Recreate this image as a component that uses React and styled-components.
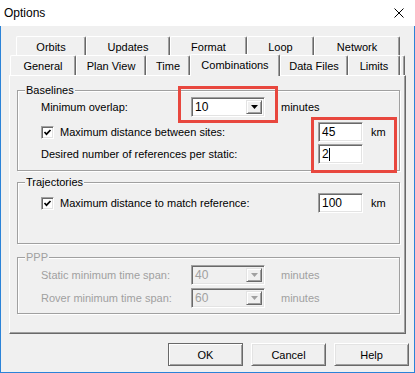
import React from 'react';
import styled, { createGlobalStyle } from 'styled-components';

const GlobalStyle = createGlobalStyle`
  html, body {
    margin: 0;
    padding: 0;
    background: #fff;
  }
  body {
    font-family: "Liberation Sans", Arial, sans-serif;
    font-size: 11px;
    color: #000;
  }
  * {
    box-sizing: border-box;
  }
`

const Window = styled.div`
  width: 415px;
  height: 373px;
  display: flex;
  flex-direction: column;
  background: #f0f0f0;
`

const TitleBar = styled.div`
  height: 26px;
  flex: none;
  display: flex;
  align-items: center;
  justify-content: space-between;
  padding: 0 11px 0 4px;
  background: #fff;
  font-size: 12px;
`

const Body = styled.div`
  flex: 1;
  display: flex;
  flex-direction: column;
  padding-top: 10px;
  border: 1px solid #2b83d8;
  border-top: none;
`

const TabRow = styled.div`
  display: flex;
  align-items: flex-end;
  height: ${(p) => p.$h}px;
  padding-left: ${(p) => p.$pl}px;
`

const Tab = styled.div`
  flex: none;
  width: ${(p) => p.$w}px;
  height: ${(p) => (p.$active ? '22px' : '100%')};
  margin-bottom: ${(p) => (p.$active ? '-1px' : '0')};
  position: ${(p) => (p.$active ? 'relative' : 'static')};
  z-index: ${(p) => (p.$active ? 1 : 'auto')};
  display: flex;
  align-items: center;
  justify-content: center;
  padding-bottom: ${(p) => (p.$active ? '2px' : '0')};
  padding-top: ${(p) => (p.$active ? '0' : '1px')};
  background: #f0f0f0;
  border-left: 1px solid #fff;
  border-top: 1px solid #fff;
  border-right: 1px solid #696969;
  border-top-left-radius: 2px;
  border-top-right-radius: 2px;
  box-shadow: inset -1px 0 0 #a0a0a0;
  white-space: nowrap;
`

const Panel = styled.div`
  margin-left: 8px;
  width: 397px;
  height: 259px;
  flex: none;
  display: flex;
  flex-direction: column;
  padding: 14px 0 0 7px;
  border: 1px solid;
  border-color: #fff #696969 #696969 #fff;
  box-shadow: inset -1px -1px 0 #a0a0a0;
`

const Group = styled.div`
  width: 383px;
  height: ${(p) => p.$h}px;
  margin-top: ${(p) => p.$mt || 0}px;
  flex: none;
  display: flex;
  flex-direction: column;
  padding-left: 23px;
  border: 1px solid #a0a0a0;
  box-shadow: 1px 1px 0 #fff, inset 1px 1px 0 #fff;
`

const GroupTitle = styled.div`
  align-self: flex-start;
  margin: -7px 0 0 -16px;
  padding: 0 1px;
  line-height: 13px;
  background: #f0f0f0;
  color: ${(p) => (p.$disabled ? '#a0a0a0' : '#000')};
`

const Row = styled.div`
  display: flex;
  align-items: center;
  height: 20px;
  margin-top: ${(p) => p.$mt || 0}px;
`

const Label = styled.div`
  flex: none;
  width: ${(p) => p.$w}px;
  display: flex;
  align-items: center;
  white-space: nowrap;
  color: ${(p) => (p.$disabled ? '#a0a0a0' : '#000')};
`

const Unit = styled.span`
  margin-left: ${(p) => p.$ml}px;
  color: ${(p) => (p.$disabled ? '#a0a0a0' : '#000')};
`

const CheckBox = styled.span`
  width: 13px;
  height: 13px;
  flex: none;
  margin-right: 6px;
  display: flex;
  align-items: center;
  justify-content: center;
  background: #fff;
  border: 1px solid;
  border-color: #a0a0a0 #fff #fff #a0a0a0;
  box-shadow: inset 1px 1px 0 #696969, inset -1px -1px 0 #e3e3e3;
`

const Combo = styled.div`
  width: 74px;
  height: 20px;
  flex: none;
  display: flex;
  align-items: stretch;
  padding: 2px;
  background: ${(p) => (p.$disabled ? '#f0f0f0' : '#fff')};
  border: 1px solid;
  border-color: #a0a0a0 #fff #fff #a0a0a0;
  box-shadow: inset 1px 1px 0 #696969, inset -1px -1px 0 #e3e3e3;
`

const ComboText = styled.span`
  flex: 1;
  display: flex;
  align-items: center;
  padding-left: 1px;
  font-size: 12px;
  color: ${(p) => (p.$disabled ? '#a0a0a0' : '#000')};
`

const ComboButton = styled.span`
  width: 16px;
  display: flex;
  align-items: center;
  justify-content: center;
  background: #f0f0f0;
  border: 1px solid;
  border-color: #e3e3e3 #696969 #696969 #e3e3e3;
  box-shadow: inset 1px 1px 0 #fff, inset -1px -1px 0 #a0a0a0;
`

const TextBox = styled.div`
  width: 45px;
  height: 20px;
  flex: none;
  display: flex;
  align-items: center;
  padding: 0 3px;
  background: #fff;
  font-size: 12px;
  border: 1px solid;
  border-color: #a0a0a0 #fff #fff #a0a0a0;
  box-shadow: inset 1px 1px 0 #696969, inset -1px -1px 0 #e3e3e3;
`

const Caret = styled.span`
  width: 1px;
  height: 13px;
  background: #000;
`

const Pair = styled.div`
  display: flex;
  align-items: flex-start;
  margin-top: ${(p) => p.$mt || 0}px;
`

const Stack = styled.div`
  display: flex;
  flex-direction: column;
  gap: 2px;
`

const Highlight = styled.div`
  position: relative;
  display: flex;
  flex-direction: ${(p) => (p.$col ? 'column' : 'row')};
  gap: 2px;
  &::after {
    content: '';
    position: absolute;
    top: -${(p) => p.$t}px;
    right: -${(p) => p.$r}px;
    bottom: -${(p) => p.$b}px;
    left: -${(p) => p.$l}px;
    border: 3px solid #e8473e;
    pointer-events: none;
  }
`

const Footer = styled.div`
  display: flex;
  justify-content: flex-end;
  gap: 8px;
  margin-top: 9px;
  padding-right: 5px;
`

const Button = styled.button`
  width: 75px;
  height: 23px;
  padding: 0;
  font-family: inherit;
  font-size: 11px;
  color: #000;
  background: #f0f0f0;
  border: 1px solid;
  border-color: ${(p) => (p.$default ? '#696969' : '#fff #696969 #696969 #fff')};
  box-shadow: ${(p) =>
    p.$default
      ? 'inset 1px 1px 0 #fff, inset -1px -1px 0 #a0a0a0'
      : 'inset 1px 1px 0 #e3e3e3, inset -1px -1px 0 #a0a0a0'};
`

const Arrow = ({ disabled }) => (
  <svg width="7" height="4" viewBox="0 0 7 4">
    <polygon points="0,0 7,0 3.5,4" fill={disabled ? '#a0a0a0' : '#000'} />
  </svg>
)

const Check = () => (
  <svg width="9" height="9" viewBox="0 0 9 9">
    <polyline points="1.5,4 3.5,6.2 7.5,2" fill="none" stroke="#000" strokeWidth="1.7" />
  </svg>
)

const Dropdown = ({ value, disabled }) => (
  <Combo $disabled={disabled}>
    <ComboText $disabled={disabled}>{value}</ComboText>
    <ComboButton>
      <Arrow disabled={disabled} />
    </ComboButton>
  </Combo>
)

const backTabs = [
  { name: 'Orbits', w: 70 },
  { name: 'Updates', w: 84 },
  { name: 'Format', w: 77 },
  { name: 'Loop', w: 67 },
  { name: 'Network', w: 86 },
]

const frontTabs = [
  { name: 'General', w: 66 },
  { name: 'Plan View', w: 70 },
  { name: 'Time', w: 44 },
  { name: 'Combinations', w: 90, active: true },
  { name: 'Data Files', w: 68 },
  { name: 'Limits', w: 52 },
  { name: '', w: 5 },
]

export default function App() {
  return (
    <>
      <GlobalStyle />
      <Window>
        <TitleBar>
          <span>Options</span>
          <svg width="10" height="10" viewBox="0 0 10 10">
            <path d="M0.5 0.5 L9.5 9.5 M9.5 0.5 L0.5 9.5" stroke="#000" strokeWidth="1" />
          </svg>
        </TitleBar>
        <Body>
          <TabRow $h={19} $pl={15}>
            {backTabs.map((t) => (
              <Tab key={t.name} $w={t.w}>{t.name}</Tab>
            ))}
          </TabRow>
          <TabRow $h={20} $pl={9}>
            {frontTabs.map((t, i) => (
              <Tab key={i} $w={t.w} $active={t.active}>{t.name}</Tab>
            ))}
          </TabRow>
          <Panel>
            <Group $h={81}>
              <GroupTitle>Baselines</GroupTitle>
              <Row>
                <Label $w={150}>Minimum overlap:</Label>
                <Highlight $t={11} $r={13} $b={6} $l={13}>
                  <Dropdown value="10" />
                </Highlight>
                <Unit $ml={16}>minutes</Unit>
              </Row>
              <Pair $mt={5}>
                <Stack>
                  <Row>
                    <Label $w={277}>
                      <CheckBox><Check /></CheckBox>
                      Maximum distance between sites:
                    </Label>
                  </Row>
                  <Row>
                    <Label $w={277}>Desired number of references per static:</Label>
                  </Row>
                </Stack>
                <Highlight $col $t={5} $r={34} $b={9} $l={7}>
                  <TextBox>45</TextBox>
                  <TextBox>2<Caret /></TextBox>
                </Highlight>
                <Row>
                  <Unit $ml={8}>km</Unit>
                </Row>
              </Pair>
            </Group>

            <Group $h={62} $mt={11}>
              <GroupTitle>Trajectories</GroupTitle>
              <Row $mt={4}>
                <Label $w={277}>
                  <CheckBox><Check /></CheckBox>
                  Maximum distance to match reference:
                </Label>
                <TextBox>100</TextBox>
                <Unit $ml={8}>km</Unit>
              </Row>
            </Group>

            <Group $h={57} $mt={13}>
              <GroupTitle $disabled>PPP</GroupTitle>
              <Row $mt={1}>
                <Label $w={150} $disabled>Static minimum time span:</Label>
                <Dropdown value="40" disabled />
                <Unit $ml={16} $disabled>minutes</Unit>
              </Row>
              <Row $mt={3}>
                <Label $w={150} $disabled>Rover minimum time span:</Label>
                <Dropdown value="60" disabled />
                <Unit $ml={16} $disabled>minutes</Unit>
              </Row>
            </Group>
          </Panel>
          <Footer>
            <Button $default>OK</Button>
            <Button>Cancel</Button>
            <Button>Help</Button>
          </Footer>
        </Body>
      </Window>
    </>
  )
}
